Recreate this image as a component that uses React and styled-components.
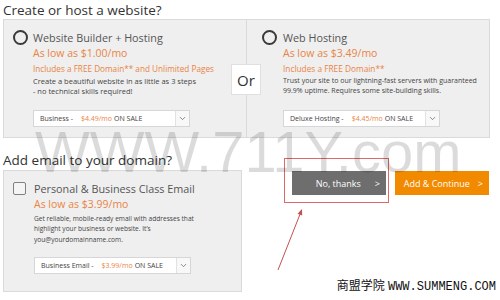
import React from "react";
import styled, { createGlobalStyle } from "styled-components";
import { ChevronDown } from "lucide-react";

const Global = createGlobalStyle`
  html, body { margin: 0; padding: 0; background: #fff; }
  body { font-family: "Open Sans", "Noto Sans", sans-serif; }
  * { box-sizing: border-box; }
`;

const ORANGE = "#ea8445";

const Page = styled.div`
  position: relative;
  width: 500px;
  height: 300px;
  overflow: hidden;
  padding: 1px 0 0 3px;
  background: #fff;
`;

const Heading = styled.h2`
  margin: ${(p) => p.$top || 0}px 0 0;
  height: 18px;
  font-size: 13.5px;
  font-weight: 400;
  line-height: 18px;
  color: #333;
  white-space: nowrap;
`;

const CardRow = styled.div`
  position: relative;
  display: flex;
  width: 487px;
  height: 119px;
`;

const Card = styled.section`
  width: ${(p) => p.$w}px;
  height: ${(p) => p.$h || 119}px;
  flex: none;
  background: #efefef;
  border: 1px solid #dadada;
  border-left-width: ${(p) => (p.$noLeft ? 0 : 1)}px;
  padding: ${(p) => p.$pt}px 6px 0 ${(p) => p.$pl}px;
`;

const Option = styled.div`
  display: grid;
  grid-template-columns: ${(p) => p.$mark}px 1fr;
  column-gap: ${(p) => p.$gap}px;
  align-items: center;
`;

const Radio = styled.span`
  width: 15px;
  height: 15px;
  border: 2px solid #3a3a3a;
  border-radius: 50%;
`;

const Checkbox = styled.span`
  width: 13px;
  height: 13px;
  border: 1.5px solid #808080;
  border-radius: 2px;
  background: #f4f4f4;
`;

const Title = styled.div`
  font-size: 10.8px;
  line-height: 15px;
  color: #555;
  white-space: nowrap;
`;

const Price = styled.div`
  grid-column: 2;
  font-size: ${(p) => p.$fs}px;
  line-height: ${(p) => p.$lh}px;
  color: ${ORANGE};
  white-space: nowrap;
`;

const Desc = styled.p`
  grid-column: 2;
  margin: ${(p) => p.$mt || 0}px 0 0;
  font-size: ${(p) => p.$fs || 7}px;
  line-height: ${(p) => p.$lh}px;
  color: #444;
  white-space: nowrap;
`;

const Select = styled.div`
  grid-column: 2;
  margin-top: ${(p) => p.$mt}px;
  width: 157px;
  height: 17px;
  display: flex;
  align-items: stretch;
  background: #fff;
  border: 1px solid #d6d6d6;
`;

const SelectText = styled.span`
  flex: 1;
  display: flex;
  align-items: center;
  gap: 8px;
  padding-left: 6px;
  font-size: 7px;
  color: #444;
  white-space: nowrap;
`;

const SalePrice = styled.span`
  color: ${ORANGE};
  margin-right: -6px;
`;

const Caret = styled.span`
  width: 14px;
  display: flex;
  align-items: center;
  justify-content: center;
  border-left: 1px solid #e2e2e2;
  background: #f8f8f8;
  color: #666;
`;

const OrBox = styled.div`
  position: absolute;
  left: 228px;
  top: 45px;
  width: 30px;
  height: 31px;
  display: flex;
  align-items: center;
  justify-content: center;
  background: #fff;
  border: 1px solid #e0e0e0;
  font-size: 15px;
  color: #333;
`;

const BottomRow = styled.div`
  display: flex;
  align-items: flex-start;
  margin-top: 1px;
`;

const Actions = styled.div`
  display: flex;
  gap: 9px;
  margin: 1px 0 0 50px;
`;

const Highlighted = styled.div`
  position: relative;
`;

const Highlight = styled.span`
  position: absolute;
  top: -13px;
  left: -8px;
  right: -3px;
  bottom: -8px;
  border: 1px solid #dd6a6a;
  pointer-events: none;
`;

const Button = styled.button`
  width: 94px;
  height: 24px;
  display: flex;
  align-items: center;
  justify-content: flex-end;
  gap: ${(p) => p.$gap}px;
  padding: 0 6px 0 0;
  border: 0;
  border-radius: 0;
  background: ${(p) => p.$bg};
  color: #fff;
  font-family: "Open Sans", "Noto Sans", sans-serif;
  font-size: 9px;
  white-space: nowrap;
`;

const Watermark = styled.div`
  position: absolute;
  left: 35px;
  top: 123px;
  font-family: "Liberation Sans", Arial, sans-serif;
  font-size: 58px;
  line-height: 58px;
  color: rgba(0, 0, 0, 0.14);
  white-space: nowrap;
  pointer-events: none;
`;

const Arrow = styled.svg`
  position: absolute;
  left: 270px;
  top: 200px;
  pointer-events: none;
`;

const Credit = styled.div`
  position: absolute;
  right: 4px;
  bottom: 7px;
  font-size: 12px;
  line-height: 12px;
  color: #111;
  white-space: nowrap;
`;

const CreditCn = styled.span`
  font-family: "Noto Sans CJK SC", sans-serif;
  font-weight: 400;
`;

const CreditEn = styled.span`
  font-family: "Liberation Mono", monospace;
`;

function Dropdown({ label, price, mt }) {
  return (
    <Select $mt={mt}>
      <SelectText>
        {label} -<SalePrice>{price}</SalePrice> ON SALE
      </SelectText>
      <Caret>
        <ChevronDown size={9} strokeWidth={2} />
      </Caret>
    </Select>
  );
}

export default function App() {
  return (
    <>
      <Global />
      <Page>
        <Heading>Create or host a website?</Heading>
        <CardRow>
          <Card $w={244} $pt={10} $pl={9}>
            <Option $mark={15} $gap={5}>
              <Radio />
              <Title>Website Builder + Hosting</Title>
              <Price $fs={10.5} $lh={16}>As low as $1.00/mo</Price>
              <Price $fs={8.2} $lh={15}>Includes a FREE Domain** and Unlimited Pages</Price>
              <Desc $fs={7.5} $lh={10}>
                Create a beautiful website in as little as 3 steps
                <br />- no technical skills required!
              </Desc>
              <Dropdown label="Business" price="$4.49/mo" mt={14} />
            </Option>
          </Card>
          <Card $w={243} $pt={10} $pl={15} $noLeft>
            <Option $mark={15} $gap={6}>
              <Radio />
              <Title>Web Hosting</Title>
              <Price $fs={10.5} $lh={16}>As low as $3.49/mo</Price>
              <Price $fs={8.3} $lh={15}>Includes a FREE Domain**</Price>
              <Desc $fs={7} $lh={10}>
                Trust your site to our lightning-fast servers with guaranteed
                <br />
                99.9% uptime. Requires some site-building skills.
              </Desc>
              <Dropdown label="Deluxe Hosting" price="$4.45/mo" mt={14} />
            </Option>
          </Card>
          <OrBox>Or</OrBox>
        </CardRow>

        <Heading $top={13}>Add email to your domain?</Heading>
        <BottomRow>
          <Card $w={239} $h={122} $pt={10} $pl={9}>
            <Option $mark={13} $gap={8}>
              <Checkbox />
              <Title>Personal &amp; Business Class Email</Title>
              <Price $fs={10.5} $lh={16}>As low as $3.99/mo</Price>
              <Desc $fs={6.6} $lh={10.5} $mt={1.5}>
                Get reliable, mobile-ready email with addresses that
                <br />
                highlight your business or website. It’s
                <br />
                you@yourdomainname.com.
              </Desc>
              <Dropdown label="Business Email" price="$3.99/mo" mt={12} />
            </Option>
          </Card>
          <Actions>
            <Highlighted>
              <Button $bg="#6e6e6e" $gap={14}>
                <span>No, thanks</span>
                <span>&gt;</span>
              </Button>
              <Highlight />
            </Highlighted>
            <Button $bg="#f28a00" $gap={8}>
              <span>Add &amp; Continue</span>
              <span>&gt;</span>
            </Button>
          </Actions>
        </BottomRow>

        <Watermark>WWW.711Y.com</Watermark>

        <Arrow width="40" height="75" viewBox="0 0 40 75">
          <line x1="8" y1="70" x2="30.5" y2="13" stroke="#c25252" strokeWidth="1" />
          <polygon points="32,9 32.2,15.6 27.6,13.8" fill="#c25252" />
        </Arrow>

        <Credit>
          <CreditCn>商盟学院</CreditCn> <CreditEn>WWW.SUMMENG.COM</CreditEn>
        </Credit>
      </Page>
    </>
  );
}
